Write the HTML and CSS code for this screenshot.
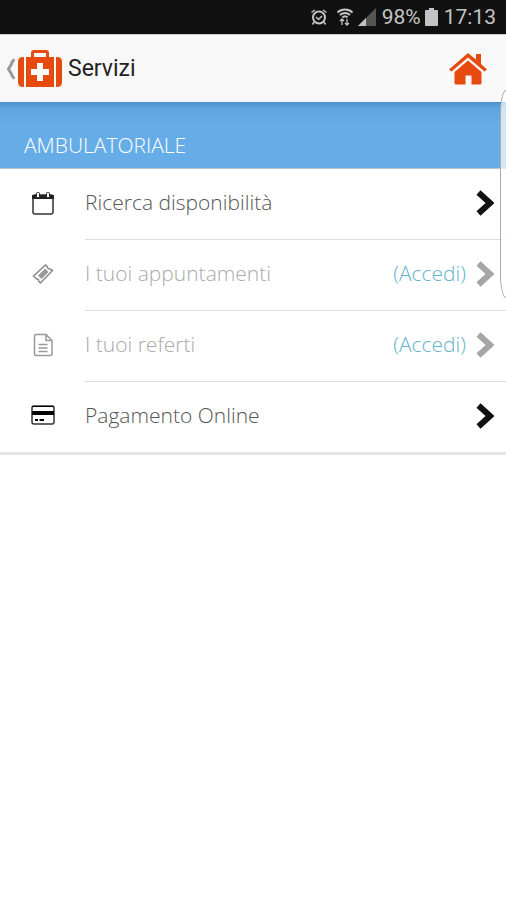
FILE: index.html
```html
<!DOCTYPE html>
<html lang="it">
<head>
<meta charset="utf-8">
<meta name="viewport" content="width=device-width, initial-scale=1">
<title>Servizi</title>
<link rel="stylesheet" href="styles.css">
</head>
<body>
<div class="status">
  <svg class="alarm" viewBox="0 0 18 18" fill="none" stroke="currentColor" stroke-width="2"><circle cx="9" cy="9.500" r="6"/><path d="M6 9l2.500 2.500L12 8M1.500 4.500L5 2M16.500 4.500L13 2M4 14l-1.500 2.500M14 14l1.500 2.500" stroke-width="1.500"/></svg>
  <svg class="wifi" viewBox="0 0 18 18" fill="none" stroke="currentColor" stroke-width="2"><path d="M1.500 4.500C5.500.500 12.500.500 16.500 4.500M4 7c3-2.500 7-2.500 10 0M6.500 9.500c1.500-1.500 3.500-1.500 5 0"/><path d="M6 11v6M4 13l2-2 2 2M11 11v6M9 15l2 2 2-2" stroke-width="1.300"/></svg>
  <svg class="signal" viewBox="0 0 18 18"><path fill="#555" d="M18 0v18H0z"/><path fill="currentColor" d="M8 10v8H0z"/></svg>
  <span>98%</span>
  <svg class="battery" viewBox="0 0 13 18"><path fill="currentColor" d="M4 0h5v2h3q1 0 1 1v14q0 1-1 1H1q-1 0-1-1V3q0-1 1-1h3z"/></svg>
  <time>17:13</time>
</div>
<header class="bar">
  <a class="back" href="#" aria-label="Indietro">
    <svg class="caret" viewBox="0 0 10 22" fill="none" stroke="#999" stroke-width="3"><path d="M8.500 1.500Q6 3 5.500 6L2.500 11l3 5q.500 3 3 4.500"/></svg>
    <svg class="case" viewBox="0 0 44 38"><g fill="#e64a0e"><path d="M6 7v30H5q-5 0-5-5V12q0-5 5-5zM38 7v30h1q5 0 5-5V12q0-5-5-5z"/><path fill-rule="evenodd" d="M8 7h5V3q0-3 3-3h12q3 0 3 3v4h5v30H8zM16 7h12V3H16z"/></g><path fill="#fff" d="M19 13h6v6h6v6h-6v6h-6v-6h-6v-6h6z"/></svg>
  </a>
  <h1>Servizi</h1>
  <a class="home" href="#" aria-label="Home"><svg viewBox="0 0 38 32" fill="#e64a0e"><path d="M19 0l8 6.500V1h5v10l6 5.500-2.500 2L19 4.500 2.500 18.500 0 16.500z"/><path d="M19 7.500l13.500 11.500v11q0 1.500-1.500 1.500h-8.500v-9h-6v9H7q-1.500 0-1.500-1.500V19z"/></svg></a>
</header>
<main>
  <h2>AMBULATORIALE</h2>
  <ul>
    <li><a href="#">
      <svg class="icon" viewBox="0 0 24 24"><rect x="2" y="4" width="20" height="19" rx="2" fill="none" stroke="#333" stroke-width="1.500"/><path fill="#222" d="M1 4h22v4H1z"/><g fill="#fff" stroke="#222"><rect x="5.500" y="1.500" width="3" height="5" rx="1"/><rect x="15.500" y="1.500" width="3" height="5" rx="1"/></g></svg>
      <span class="row"><span class="label">Ricerca disponibilità</span><svg class="chev" viewBox="0 0 18 26"><path d="M2.500 2.500L14 13 2.500 23.500"/></svg></span></a></li>
    <li class="off"><a href="#">
      <svg class="icon" viewBox="0 0 24 24" fill="none" stroke="#888" stroke-width="1.500"><path d="M2.500 14L14.500 3l2 2q0 2 2.500 2l2.500 1.500-12 12.500-2-2q.500-2.500-2-2z"/><path fill="#999" stroke="none" d="M7 13.500l7-7 3.500 3.500-7 7z"/></svg>
      <span class="row"><span class="label">I tuoi appuntamenti</span><span class="login">(Accedi)</span><svg class="chev" viewBox="0 0 18 26"><path d="M2.500 2.500L14 13 2.500 23.500"/></svg></span></a></li>
    <li class="off"><a href="#">
      <svg class="icon" viewBox="0 0 24 24" fill="none" stroke="#999" stroke-width="1.500"><path d="M5 1.500h10l6 6V21q0 1.500-1.500 1.500H5Q3.500 22.500 3.500 21V3Q3.500 1.500 5 1.500zM15 1.500v6h6M7.500 11.500h9M7.500 15h9M7.500 18.500h9"/></svg>
      <span class="row"><span class="label">I tuoi referti</span><span class="login">(Accedi)</span><svg class="chev" viewBox="0 0 18 26"><path d="M2.500 2.500L14 13 2.500 23.500"/></svg></span></a></li>
    <li><a href="#">
      <svg class="icon" viewBox="0 0 24 24"><rect x="1" y="3" width="22" height="18" rx="2" fill="none" stroke="#333" stroke-width="1.500"/><path fill="#000" d="M1 3h22v1H1zM1 8h22v4H1zM4 16h3v2H4zM8.500 16H13v2H8.500z"/></svg>
      <span class="row"><span class="label">Pagamento Online</span><svg class="chev" viewBox="0 0 18 26"><path d="M2.500 2.500L14 13 2.500 23.500"/></svg></span></a></li>
  </ul>
</main>
<div class="edge" aria-hidden="true"></div>
</body>
</html>
```
FILE: styles.css
```css
* { box-sizing: border-box; }
body {
  margin: 0;
  min-height: 100vh;
  position: relative;
  overflow-x: hidden;
  background: #fff;
  font-family: "Open Sans", sans-serif;
}
a { color: inherit; text-decoration: none; }
svg { display: block; flex: none; }
.status {
  height: 34px;
  padding: 0 10px;
  display: flex;
  align-items: center;
  justify-content: flex-end;
  background: #111;
  color: #c4c4c4;
  font: 21px/34px Roboto, sans-serif;
}
.alarm { width: 18px; height: 18px; margin-right: 8px; }
.wifi { width: 18px; height: 18px; margin-right: 4px; }
.signal { width: 18px; height: 18px; margin-right: 6px; }
.battery { width: 13px; height: 18px; margin: 0 6px 0 4px; }
.bar {
  height: 68px;
  padding: 0 19px 0 6px;
  display: flex;
  align-items: center;
  background: #f8f8f8;
  border-top: 1px solid #ccc;
}
.back { display: flex; align-items: center; gap: 2px; }
.caret { width: 10px; height: 22px; }
.case { width: 44px; height: 38px; }
h1 {
  margin: 0 0 0 6px;
  flex: 1;
  color: #222;
  font: 23px/32px Roboto, sans-serif;
}
.home svg { width: 38px; height: 32px; }
h2 {
  margin: 0;
  padding: 27px 24px 7px;
  background: linear-gradient(#4a90cb, #5fa6df 6px, #66ade8 22px);
  border-bottom: 1px solid #b5c4d2;
  color: #fff;
  font-size: 21px;
  line-height: 32px;
  font-weight: 300;
}
ul { margin: 0; padding: 0; list-style: none; border-bottom: 3px solid #e6e6e6; }
li a { display: flex; align-items: center; padding-left: 31px; }
.icon { width: 24px; height: 24px; margin: 0 30px 4px 0; }
.row {
  flex: 1;
  height: 71px;
  padding: 0 12px 2px 0;
  display: flex;
  align-items: center;
  gap: 10px;
  border-bottom: 1px solid #ddd;
  font-size: 21px;
  line-height: 32px;
  font-weight: 300;
}
li:last-child .row { height: 70px; border-bottom: 0; }
.label { flex: 1; color: #555; }
.label, .login { padding-bottom: 2px; }
.off .label { color: #aaa; }
.login { color: #64b3cc; }
.chev { width: 18px; height: 26px; fill: none; stroke: #111; stroke-width: 6; }
.off .chev { stroke: #a5a5a5; }
.edge {
  position: absolute;
  top: 90px;
  right: 0;
  width: 6px;
  height: 208px;
  border: 1px solid #aaa;
  border-right: 0;
  border-radius: 6px 0 0 6px / 24px 0 0 24px;
  background: rgba(255, 255, 255, 0.7);
}
```
